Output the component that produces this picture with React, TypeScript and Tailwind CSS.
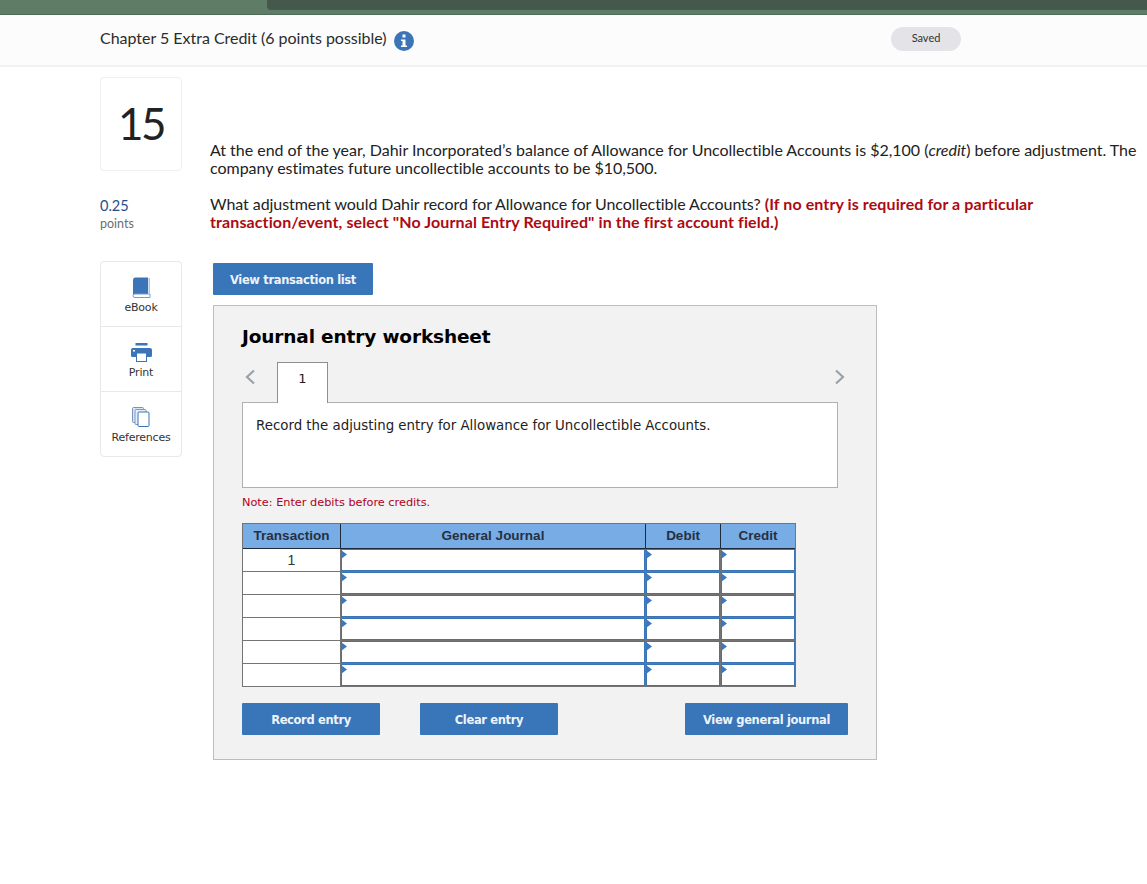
const rows = ['1', '', '', '', '', '']

function Tri() {
  return (
    <svg className="absolute -left-px top-0" width="6" height="9" viewBox="0 0 6 9">
      <path d="M0 0 L6 4.5 L0 9 Z" fill="#3b78bd" />
    </svg>
  )
}

function EntryCell({ w }: { w: string }) {
  return (
    <div className={`relative border border-[#3b75b5] bg-white ${w}`}>
      <Tri />
    </div>
  )
}

function ActionButton({ label, w }: { label: string; w: string }) {
  return (
    <div className={`flex h-8 items-center justify-center rounded-[1px] bg-[#3975b9] pt-[3px] text-[11.5px] font-bold text-[#eef3fa] font-['DejaVu_Sans',sans-serif] tracking-[-0.35px] ${w}`}>
      {label}
    </div>
  )
}

function SideItem({ label, icon, last }: { label: string; icon: React.ReactNode; last?: boolean }) {
  return (
    <div className={`flex flex-col items-center pt-[14px] ${last ? 'h-[64px]' : 'h-[65px] border-b border-[#e8e8e8]'}`}>
      <div className="flex h-[22px] items-center justify-center">{icon}</div>
      <div className="mt-[3px] text-[11px] leading-[14px] text-[#333] font-['DejaVu_Sans',sans-serif] tracking-[-0.2px]">{label}</div>
    </div>
  )
}

export default function App() {
  return (
    <div className="min-h-[884px] w-[1147px] overflow-hidden bg-white text-[#222] font-['Lato',sans-serif] [font-variant-ligatures:none]">
      {/* browser chrome sliver */}
      <div className="h-[15px] border-b border-[#506a58] bg-[#5f7d66] pl-[267px]">
        <div className="h-[10px] rounded-bl-[4px] bg-[#44594b]" />
      </div>

      <div className="flex h-[52px] border-b-2 border-[#f1f1f1] bg-[#fcfcfc] pl-[100px]">
        <div className="flex h-[48px] items-center text-[16px] text-[#2b2b2b]">
          <span className="mb-[2px] w-[294px] whitespace-nowrap tracking-[-0.02px]">Chapter 5 Extra Credit (6 points possible)</span>
          <svg width="20" height="20" viewBox="0 0 20 20" className="mt-[3px]">
            <circle cx="10" cy="10" r="10" fill="#3b75b8" />
            <rect x="8.5" y="3.5" width="3" height="3" fill="#fff" />
            <path d="M7 8.5 H11.5 V14.5 H13 V16 H7 V14.5 H8.5 V10 H7 Z" fill="#fff" />
          </svg>
        </div>
        <div className="ml-[477px] mt-[12px] flex h-6 w-[70px] items-center justify-center rounded-full bg-[#e4e3e7] pb-[2px] text-[11px] text-[#333]">
          Saved
        </div>
      </div>

      <div className="flex pl-[100px] pt-[10px]">
        {/* left rail */}
        <div className="w-[82px] shrink-0">
          <div className="flex h-[94px] items-center justify-center rounded-[4px] border border-[#efefef] pb-[2px] text-[44px] tracking-[-2.5px] text-[#222]">
            15
          </div>
          <div className="mt-[26px] text-[14.5px] leading-[18px] text-[#1f4e8c]">0.25</div>
          <div className="text-[12.5px] leading-[18px] text-[#6e6e6e]">points</div>
          <div className="mt-[28px] rounded-[4px] border border-[#e8e8e8]">
            <SideItem
              label="eBook"
              icon={
                <svg width="19" height="21" viewBox="0 0 19 21">
                  <path d="M1 3 Q1 0.5 3 0.5 H16 V17 H3 Q1 17 1 19 Z" fill="#3b75b8" />
                  <path d="M1 18.5 Q1 17 3 17 H18 V20.5 H3 Q1 20.5 1 18.5 Z" fill="#fff" stroke="#6e9bd0" />
                  <rect x="16.5" y="1" width="1.5" height="16" fill="#a9c4e4" />
                </svg>
              }
            />
            <SideItem
              label="Print"
              icon={
                <svg width="21" height="19" viewBox="0 0 21 19">
                  <rect x="4.5" y="0" width="12" height="2.5" fill="#3b75b8" />
                  <path d="M2 5 H19 Q21 5 21 7 V13 Q21 14 19 14 H1.5 Q0 14 0 13 V7 Q0 5 2 5 Z" fill="#3b75b8" />
                  <rect x="5.5" y="10" width="10" height="8.5" fill="#fff" stroke="#3b75b8" />
                  <rect x="2" y="7" width="2" height="1.5" fill="#fff" />
                </svg>
              }
            />
            <SideItem
              last
              label="References"
              icon={
                <svg width="18" height="20" viewBox="0 0 18 20">
                  <rect x="0.5" y="0.5" width="11" height="15" rx="1" fill="#dbe6f3" stroke="#7f8fb5" />
                  <rect x="3" y="2.5" width="11" height="15" rx="1" fill="#e8eff8" stroke="#6e9bd0" />
                  <rect x="6" y="5" width="11" height="14.5" rx="1" fill="#fff" stroke="#3b75b8" />
                </svg>
              }
            />
          </div>
        </div>

        {/* question */}
        <div className="ml-[28px] w-[937px] shrink-0 pt-[64px]">
          <p className="whitespace-nowrap text-[16px] leading-[18px] tracking-[-0.02px] text-[#222]">
            At the end of the year, Dahir Incorporated’s balance of Allowance for Uncollectible Accounts is $2,100 (<i>credit</i>) before adjustment. The
            <br />
            company estimates future uncollectible accounts to be $10,500.
          </p>
          <p className="mt-[18px] whitespace-nowrap text-[16px] leading-[18px] tracking-[-0.06px] text-[#222]">
            What adjustment would Dahir record for Allowance for Uncollectible Accounts?{' '}
            <b className="tracking-[0.1px] text-[#ad0a12]">(If no entry is required for a particular</b>
            <br />
            <b className="tracking-[0.11px] text-[#ad0a12]">transaction/event, select "No Journal Entry Required" in the first account field.)</b>
          </p>

          <div className="ml-[3px] mt-[32px]">
            <ActionButton label="View transaction list" w="w-[160px]" />
          </div>

          {/* worksheet */}
          <div className="ml-[3px] mt-[10px] h-[455px] w-[664px] border border-[#bdbdbd] bg-[#f2f2f2] pl-[28px] pt-[19px]">
            <h2 className="text-[18.5px] font-bold leading-[24px] text-black font-['DejaVu_Sans',sans-serif] tracking-[-0.15px]">
              Journal entry worksheet
            </h2>
            <div className="mt-[13px] flex h-[41px] w-[604px] items-center">
              <svg width="12" height="16" viewBox="0 0 12 16" className="mb-[12px] ml-[2px]">
                <path d="M10 1.5 L3 8 L10 14.5" fill="none" stroke="#9aa1a8" strokeWidth="2.2" />
              </svg>
              <div className="relative z-10 ml-[21px] flex h-[41px] w-[51px] items-center justify-center border border-b-0 border-[#8e8e8e] bg-white pb-[8px] text-[13px] text-[#222] font-['DejaVu_Sans',sans-serif]">
                1
              </div>
              <svg width="12" height="16" viewBox="0 0 12 16" className="mb-[12px] ml-auto">
                <path d="M2 1.5 L9 8 L2 14.5" fill="none" stroke="#9aa1a8" strokeWidth="2.2" />
              </svg>
            </div>
            <div className="-mt-px h-[86px] w-[596px] border border-[#b0b0b0] bg-white px-[13px] pt-[15px] text-[13.35px] leading-[16px] text-[#222] font-['DejaVu_Sans',sans-serif]">
              Record the adjusting entry for Allowance for Uncollectible Accounts.
            </div>
            <div className="mt-[8px] text-[11.3px] leading-[14px] text-[#b00020] font-['DejaVu_Sans',sans-serif]">
              Note: Enter debits before credits.
            </div>

            {/* journal table */}
            <div className="mt-[13px] flex w-[554px] flex-col gap-px border border-[#747474] bg-[#747474] font-['Liberation_Sans',sans-serif]">
              <div className="flex h-[24px] gap-px bg-[#1d2a3a] text-[13.5px] font-bold leading-[24px] text-[#263040]">
                <div className="w-[97px] bg-[#78ace4] text-center">Transaction</div>
                <div className="w-[304px] bg-[#78ace4] text-center">General Journal</div>
                <div className="w-[74px] bg-[#78ace4] text-center">Debit</div>
                <div className="w-[74px] bg-[#78ace4] text-center">Credit</div>
              </div>
              {rows.map((r, i) => (
                <div key={i} className={`flex h-[22px] gap-px ${i === 0 ? 'border-t border-[#1d2a3a] h-[23px] -mt-px' : ''}`}>
                  <div className="w-[97px] bg-white text-center text-[14px] leading-[22px] text-[#333]">{r}</div>
                  <EntryCell w="w-[304px]" />
                  <EntryCell w="w-[74px]" />
                  <EntryCell w="w-[74px]" />
                </div>
              ))}
            </div>

            <div className="mt-[16px] flex w-[606px]">
              <ActionButton label="Record entry" w="w-[138px]" />
              <ActionButton label="Clear entry" w="w-[138px] ml-[40px]" />
              <ActionButton label="View general journal" w="w-[163px] ml-auto" />
            </div>
          </div>
        </div>
      </div>
    </div>
  )
}
